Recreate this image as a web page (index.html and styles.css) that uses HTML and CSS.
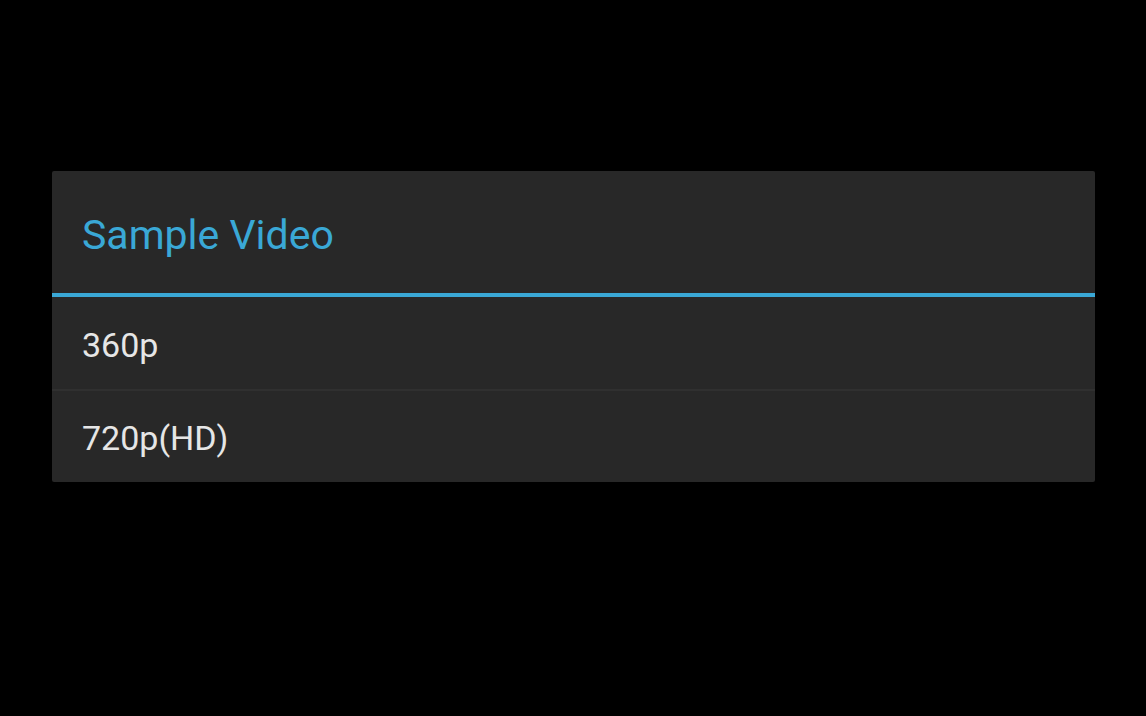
FILE: index.html
```html
<!DOCTYPE html>
<html lang="en">
<head>
  <meta charset="UTF-8" />
  <title>Sample Video</title>
  <link rel="stylesheet" href="styles.css">
</head>
<body>
  <div class="dialog">
    <div class="dialog-title">Sample Video</div>
    <div class="dialog-list">
      <div class="dialog-item">360p</div>
      <div class="dialog-item">720p(HD)</div>
    </div>
  </div>
</body>
</html>
```

FILE: styles.css
```css
:root {
  --holo-blue: #3aa8d6;
  --dialog-bg: #282828;
  --item-text: #e6e6e6;
}

* {
  box-sizing: border-box;
}

html, body {
  height: 100%;
}

body {
  margin: 0;
  background: #000;
  font-family: Roboto, "Noto Sans", sans-serif;
  padding: 171px 51px 0 52px;
}

.dialog {
  background: var(--dialog-bg);
  border-radius: 2px;
}

.dialog-title {
  height: 126px;
  padding: 6px 30px 0;
  display: flex;
  align-items: center;
  color: var(--holo-blue);
  font-size: 41px;
  border-bottom: 4px solid var(--holo-blue);
}

.dialog-item {
  height: 92px;
  padding: 3px 30px 0;
  display: flex;
  align-items: center;
  color: var(--item-text);
  font-size: 34px;
}

.dialog-item + .dialog-item {
  border-top: 2px solid #303030;
  height: 93px;
}
```
